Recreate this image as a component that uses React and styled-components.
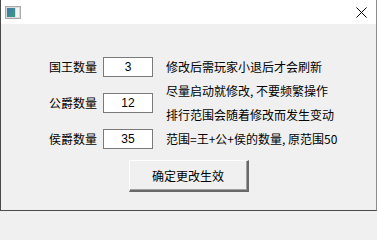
import React from 'react';
import styled, { createGlobalStyle } from 'styled-components';

const GlobalStyle = createGlobalStyle`
    html, body {
        margin: 0;
        padding: 0;
        background: #f0f0f0;
    }
`;

const CJK = `"Noto Sans CJK SC", "Liberation Sans", sans-serif`;

const Window = styled.div`
    width: 377px;
    height: 211px;
    box-sizing: border-box;
    display: flex;
    flex-direction: column;
    background: #f0f0f0;
    border-left: 1px solid #4a4a4a;
    border-right: 1px solid #8c8c8c;
    border-bottom: 1px solid #4a4a4a;
    font-family: ${CJK};
    font-size: 12px;
    color: #000;
`;

const TitleBar = styled.div`
    height: 24px;
    flex-shrink: 0;
    background: #fff;
    display: flex;
    align-items: center;
    justify-content: space-between;
    padding: 0 9px 0 4px;
`;

const Body = styled.div`
    flex: 1;
    display: flex;
    flex-direction: column;
    padding-top: 31px;
`;

const Main = styled.div`
    display: flex;
    padding-left: 48px;
`;

const Fields = styled.div`
    display: flex;
    flex-direction: column;
    gap: 16px;
    padding-top: 2px;
`;

const Field = styled.div`
    display: flex;
    align-items: center;
    gap: 6px;
    height: 20px;
`;

const Label = styled.span`
    line-height: 20px;
    white-space: nowrap;
`;

const NumberBox = styled.div`
    width: 50px;
    height: 20px;
    box-sizing: border-box;
    background: #fff;
    border: 1px solid #7a7a7a;
    font-family: "Liberation Sans", Arial, sans-serif;
    font-size: 12px;
    display: flex;
    align-items: center;
    justify-content: center;
`;

const Notes = styled.div`
    display: flex;
    flex-direction: column;
    margin-left: 13px;
`;

const Note = styled.div`
    line-height: 24px;
    white-space: pre;
`;

const Footer = styled.div`
    display: flex;
    justify-content: center;
    margin-top: 9px;
`;

const ApplyButton = styled.button`
    width: 120px;
    height: 32px;
    box-sizing: border-box;
    background: #f0f0f0;
    border-style: solid;
    border-width: 1px 2px 2px 1px;
    border-color: #fff #696969 #696969 #fff;
    box-shadow: inset -1px -1px 0 #a0a0a0;
    font-family: ${CJK};
    font-size: 12px;
    color: #000;
    padding: 0;
`;

const AppIcon = () => (
    <svg width="16" height="13" viewBox="0 0 16 13">
        <defs>
            <linearGradient id="pane" x1="0" y1="0" x2="1" y2="1">
                <stop offset="0" stopColor="#3d78b0" />
                <stop offset="1" stopColor="#3e9a80" />
            </linearGradient>
        </defs>
        <rect x="0.5" y="0.5" width="15" height="12" fill="#dcdcdc" stroke="#a8a8a8" />
        <rect x="2" y="2" width="8" height="9" fill="url(#pane)" />
        <rect x="11" y="2" width="3" height="9" fill="#f4f4f4" />
    </svg>
);

const CloseIcon = () => (
    <svg width="11" height="11" viewBox="0 0 11 11">
        <path d="M0.5 0.5 L10.5 10.5 M10.5 0.5 L0.5 10.5" stroke="#000" strokeWidth="1" />
    </svg>
);

const fields = [
    { label: '国王数量', value: 3 },
    { label: '公爵数量', value: 12 },
    { label: '侯爵数量', value: 35 },
];

const notes = [
    '修改后需玩家小退后才会刷新',
    '尽量启动就修改, 不要频繁操作',
    '排行范围会随着修改而发生变动',
    '范围=王+公+侯的数量, 原范围50',
];

const App = () => <>
    <GlobalStyle />
    <Window>
        <TitleBar>
            <AppIcon />
            <CloseIcon />
        </TitleBar>
        <Body>
            <Main>
                <Fields>
                    {fields.map(f => (
                        <Field key={f.label}>
                            <Label>{f.label}</Label>
                            <NumberBox>{f.value}</NumberBox>
                        </Field>
                    ))}
                </Fields>
                <Notes>
                    {notes.map(n => <Note key={n}>{n}</Note>)}
                </Notes>
            </Main>
            <Footer>
                <ApplyButton>确定更改生效</ApplyButton>
            </Footer>
        </Body>
    </Window>
</>

export default App;
